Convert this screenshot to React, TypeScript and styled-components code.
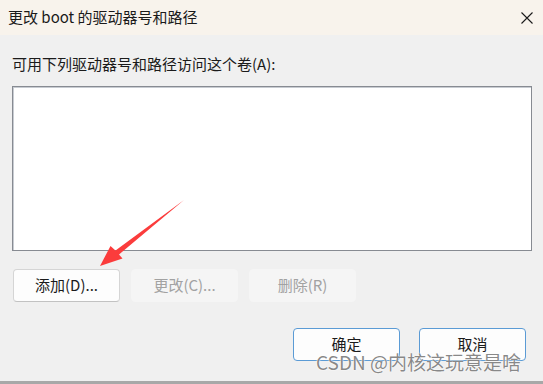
import React from 'react';
import styled, { createGlobalStyle } from 'styled-components';

const GlobalStyle = createGlobalStyle`
  html, body {
    margin: 0;
    padding: 0;
    background: #f0f0f0;
  }
  body {
    font-family: "Noto Sans CJK SC", "Noto Sans", sans-serif;
    color: #1b1b1b;
  }
`;

const Window = styled.div`
  position: relative;
  width: 543px;
  height: 384px;
  background: #f0f0f0;
  display: flex;
  flex-direction: column;
  overflow: hidden;
`;

const TitleBar = styled.div`
  height: 35px;
  flex-shrink: 0;
  background: #f8f3ec;
  display: flex;
  align-items: center;
  justify-content: space-between;
  padding: 0 10px 0 8px;
  box-sizing: border-box;
`;

const Title = styled.span`
  font-size: 15px;
  line-height: 1;
  margin-top: -3px;
  color: #1a1a1a;
`;

const CloseButton = styled.div`
  width: 12px;
  height: 12px;
  display: flex;
`;

const Body = styled.div`
  flex: 1;
  display: flex;
  flex-direction: column;
  padding: 21px 11px 0 12px;
`;

const Label = styled.div`
  font-size: 15px;
  line-height: 15px;
  margin-bottom: 15px;
  color: #1b1b1b;
`;

const ListBox = styled.div`
  height: 165px;
  background: #fff;
  border: 1px solid #878b92;
  box-shadow: inset 1px 1px 0 #c8ccd2;
  box-sizing: border-box;
`;

const ButtonRow = styled.div<{ $right?: boolean }>`
  display: flex;
  gap: ${p => (p.$right ? '19px' : '11px')};
  justify-content: ${p => (p.$right ? 'flex-end' : 'flex-start')};
  margin-top: ${p => (p.$right ? '26px' : '18px')};
  padding-right: ${p => (p.$right ? '6px' : '0')};
  padding-left: ${p => (p.$right ? '0' : '1px')};
`;

const Button = styled.div<{ $disabled?: boolean; $accent?: boolean }>`
  width: 107px;
  height: 33px;
  box-sizing: border-box;
  display: flex;
  align-items: center;
  justify-content: center;
  font-size: 15px;
  line-height: 1;
  padding-bottom: 3px;
  border-radius: 4px;
  background: ${p => (p.$disabled ? '#f5f5f5' : '#fdfdfd')};
  color: ${p => (p.$disabled ? '#a2a2a2' : '#1b1b1b')};
  border: 1px solid
    ${p => (p.$accent ? '#5b9bd5' : p.$disabled ? '#f5f5f5' : '#d5d5d5')};
  border-bottom-color: ${p => (p.$accent ? '#5b9bd5' : p.$disabled ? '#f5f5f5' : '#c2c2c2')};
`;

const BottomEdge = styled.div`
  height: 3px;
  background: #a8a8a8;
  flex-shrink: 0;
`;

const Watermark = styled.div`
  position: absolute;
  left: 316px;
  top: 352px;
  font-size: 19px;
  line-height: 1;
  white-space: nowrap;
  color: rgba(115, 115, 115, 0.85);
  text-shadow: 0 0 2px #fff, 0 0 1px #fff;
  font-family: "Noto Sans CJK SC", "Liberation Sans", sans-serif;
`;

const Arrow = styled.svg`
  position: absolute;
  left: 0;
  top: 0;
  pointer-events: none;
`;

const App: React.FC = () => {
  return (
    <Window>
      <GlobalStyle />
      <TitleBar>
        <Title>更改 boot 的驱动器号和路径</Title>
        <CloseButton>
          <svg width="12" height="12" viewBox="0 0 12 12">
            <path d="M0.5 0.5L11.5 11.5M11.5 0.5L0.5 11.5" stroke="#1a1a1a" strokeWidth="1.1" />
          </svg>
        </CloseButton>
      </TitleBar>
      <Body>
        <Label>可用下列驱动器号和路径访问这个卷(A):</Label>
        <ListBox />
        <ButtonRow>
          <Button>添加(D)...</Button>
          <Button $disabled>更改(C)...</Button>
          <Button $disabled>删除(R)</Button>
        </ButtonRow>
        <ButtonRow $right>
          <Button $accent>确定</Button>
          <Button $accent>取消</Button>
        </ButtonRow>
      </Body>
      <BottomEdge />
      <Arrow width="543" height="384" viewBox="0 0 543 384">
        <polygon
          points="184,200 119,254.5 122.5,258.5 100,266 110.5,246 115.5,250.5"
          fill="#fb3c3c"
        />
      </Arrow>
      <Watermark>CSDN @内核这玩意是啥</Watermark>
    </Window>
  );
};

export default App;
